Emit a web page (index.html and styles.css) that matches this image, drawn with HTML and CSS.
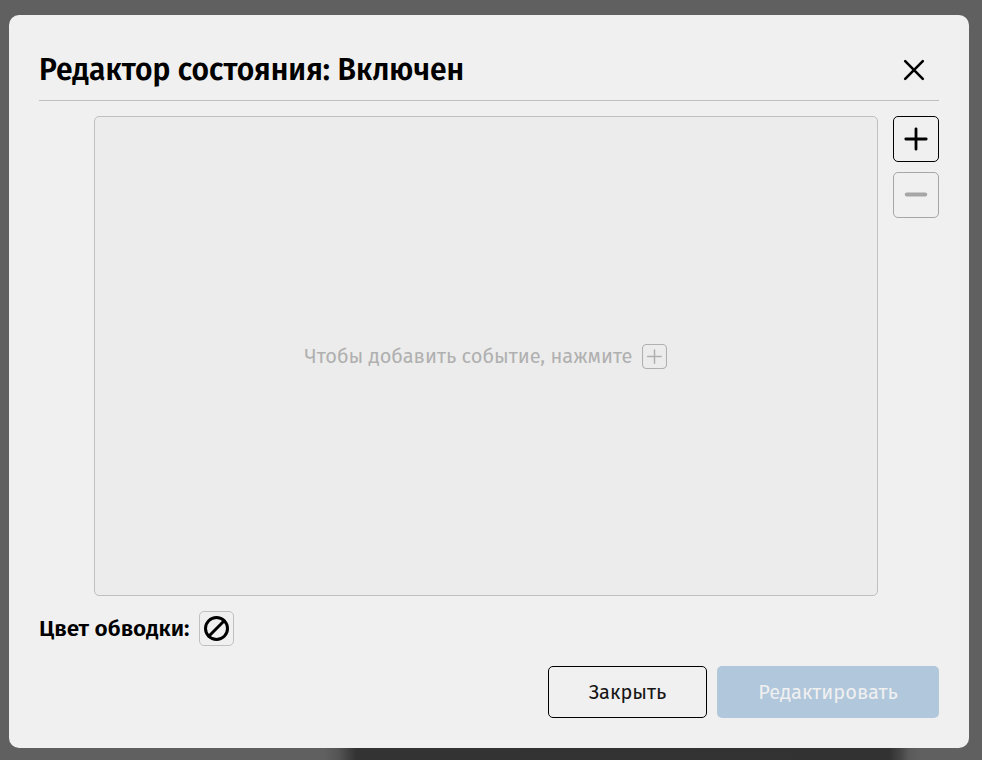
FILE: index.html
```html
<!DOCTYPE html>
<html lang="ru">
<head>
<meta charset="utf-8">
<title>Редактор состояния</title>
<link rel="stylesheet" href="styles.css">
</head>
<body>
<main class="modal">
  <header class="modal-header">
    <h1 class="title">Редактор состояния: Включен</h1>
    <button class="close" aria-label="Закрыть окно">
      <svg width="22" height="22" viewBox="0 0 22 22"><path d="M2.2 2.2L19.8 19.8M19.8 2.2L2.2 19.8"/></svg>
    </button>
  </header>
  <section class="events">
    <div class="event-list">
      <span class="hint">Чтобы добавить событие, нажмите</span>
      <svg class="hint-icon" width="25" height="25" viewBox="0 0 25 25"><rect x=".5" y=".5" width="24" height="24" rx="4"/><path class="hint-plus" d="M12.5 5.9v13.4M5.6 12.5h13.6"/></svg>
    </div>
    <div class="tools">
      <button class="tool" aria-label="Добавить"><svg width="24" height="24" viewBox="0 0 24 24"><path d="M12 1.8v20.4M1.8 12h20.4"/></svg></button>
      <button class="tool tool-disabled" disabled aria-label="Удалить"><svg width="24" height="24" viewBox="0 0 24 24"><path d="M2.7 11.5h18.6"/></svg></button>
    </div>
  </section>
  <div class="outline-row">
    <span class="outline-label">Цвет обводки:</span>
    <button class="swatch" aria-label="Без цвета"><svg width="25" height="25" viewBox="0 0 25 25"><circle cx="12.5" cy="12.5" r="11"/><path d="M4.8 20.2L20.2 4.8"/></svg></button>
  </div>
  <footer class="actions">
    <button class="button button-close"><span>Закрыть</span></button>
    <button class="button button-edit" disabled><span>Редактировать</span></button>
  </footer>
</main>
</body>
</html>
```
FILE: styles.css
```css
* { box-sizing: border-box; }
body {
  margin: 0;
  height: 760px;
  overflow: hidden;
  padding: 15px 13px 12px 9px;
  background: linear-gradient(90deg, #606060 324px, #555 338px, #333 356px, #323232 889px, #444 900px, #5a5a5a 909px, #606060 920px) 0 748px / 100% 12px no-repeat, #606060;
  font-family: "Fira Sans", "Noto Sans", sans-serif;
  color: #000;
}
button { margin: 0; padding: 0; background: none; font: inherit; color: inherit; }
svg { display: block; fill: none; stroke: currentColor; stroke-linecap: round; }
.modal {
  display: flex;
  flex-direction: column;
  height: 733px;
  padding: 30px;
  border-radius: 10px;
  background: #f0f0f0;
}
.modal-header {
  display: flex;
  align-items: center;
  justify-content: space-between;
  height: 56px;
  padding-right: 14px;
  padding-bottom: 6px;
  border-bottom: 1px solid #c0c0c0;
}
.title { margin: 0; font-size: 30px; line-height: 40px; font-weight: 600; letter-spacing: 0.03px; white-space: nowrap; }
.close { border: 0; margin-top: 1px; stroke-width: 2.6; }
.events { display: flex; gap: 15px; height: 480px; margin: 15px 0 15px 55px; }
.event-list {
  flex: 1;
  display: flex;
  align-items: center;
  justify-content: center;
  gap: 10px;
  border: 1px solid #c0c0c0;
  border-radius: 5px;
  background: #ececec;
  color: #b0b0b0;
}
.hint { font-size: 20px; line-height: 24px; white-space: nowrap; }
.hint-icon { stroke-width: 1.1; }
.hint-plus { stroke-width: 1.5; }
.tools { display: flex; flex-direction: column; gap: 10px; }
.tool {
  display: grid;
  place-items: center;
  width: 46px;
  height: 46px;
  border: 1px solid #000;
  border-radius: 5px;
  stroke-width: 2.8;
}
.tool-disabled { color: #a6a6a6; border-color: #a6a6a6; stroke-width: 3.8; }
.outline-row { display: flex; align-items: center; gap: 10px; height: 35px; }
.outline-label { font-size: 22.5px; font-weight: 600; white-space: nowrap; }
.swatch {
  display: grid;
  place-items: center;
  width: 35px;
  height: 35px;
  border: 1px solid #c0c0c0;
  border-radius: 5px;
  stroke-width: 3;
}
.actions { display: flex; justify-content: flex-end; gap: 10px; margin-top: 20px; }
.button { height: 52px; border-radius: 5px; font-size: 20px; white-space: nowrap; }
.button-close { width: 159px; border: 1px solid #000; color: #151515; }
.button-edit { width: 222px; border: 0; background: #b0c7dc; color: #f0f0f0; }
```
